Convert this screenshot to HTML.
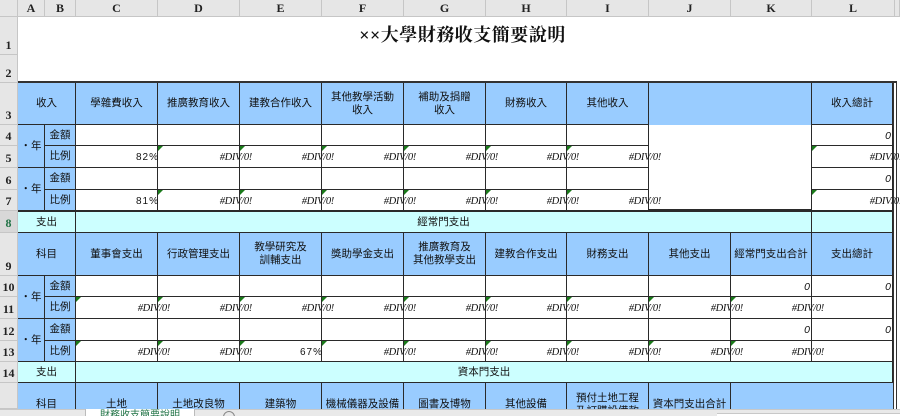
<!DOCTYPE html>
<html style="width:900px;height:416px;overflow:hidden"><head><meta charset="utf-8"><style>
body{margin:0;width:900px;height:416px;overflow:hidden;background:#fff;position:relative;font-family:"Liberation Sans","Noto Sans CJK TC",sans-serif;font-size:10.5px;color:#111}
.h{position:absolute;background:#e6e6e6;box-sizing:border-box;border-right:1px solid #c6c6c6;border-bottom:1px solid #c6c6c6;font-family:"Liberation Serif",serif;font-weight:bold;font-size:12px;color:#222;display:flex;justify-content:center;align-items:flex-end;padding-bottom:1px}
.ch{top:0;height:17px;align-items:center;padding:0}
.rh{left:0;width:18px}
.c{position:absolute;box-sizing:border-box;border-right:1px solid #2a2a2a;border-bottom:1px solid #2a2a2a;display:flex;align-items:center;justify-content:center;text-align:center;line-height:13px;white-space:nowrap}
.b{background:#99ccff}.y{background:#ccffff}.w{background:#fff}
.n{position:absolute;right:-13px;top:5px;font-style:italic;font-family:"Liberation Serif",serif;font-size:10.5px;letter-spacing:-0.3px;z-index:5}
.p{position:absolute;right:-2px;top:5px;font-size:10px;letter-spacing:1px;z-index:5}
.z{position:absolute;right:1px;top:5px;font-style:italic;font-size:10.5px}
.t{position:absolute;left:0;top:0;width:0;height:0;border-top:5px solid #1a7a1a;border-right:5px solid transparent;z-index:6}
</style></head><body>
<div class="h ch" style="left:0;width:18px;background:#e6e6e6"></div>
<div class="h ch" style="left:18px;width:27px">A</div>
<div class="h ch" style="left:45px;width:31px">B</div>
<div class="h ch" style="left:76px;width:82px">C</div>
<div class="h ch" style="left:158px;width:82px">D</div>
<div class="h ch" style="left:240px;width:82px">E</div>
<div class="h ch" style="left:322px;width:82px">F</div>
<div class="h ch" style="left:404px;width:82px">G</div>
<div class="h ch" style="left:486px;width:81px">H</div>
<div class="h ch" style="left:567px;width:82px">I</div>
<div class="h ch" style="left:649px;width:82px">J</div>
<div class="h ch" style="left:731px;width:81px">K</div>
<div class="h ch" style="left:812px;width:83px">L</div>
<div class="h ch" style="left:895px;width:5px"></div>
<div class="h rh" style="top:17px;height:38px">1</div>
<div class="h rh" style="top:55px;height:28px">2</div>
<div class="h rh" style="top:83px;height:42px">3</div>
<div class="h rh" style="top:125px;height:21px">4</div>
<div class="h rh" style="top:146px;height:22px">5</div>
<div class="h rh" style="top:168px;height:22px">6</div>
<div class="h rh" style="top:190px;height:21px">7</div>
<div class="h rh" style="top:211px;height:22px;color:#217346;background:#d8d8d8">8</div>
<div class="h rh" style="top:233px;height:43px">9</div>
<div class="h rh" style="top:276px;height:21px">10</div>
<div class="h rh" style="top:297px;height:22px">11</div>
<div class="h rh" style="top:319px;height:22px">12</div>
<div class="h rh" style="top:341px;height:21px">13</div>
<div class="h rh" style="top:362px;height:21px">14</div>
<div class="h rh" style="top:383px;height:26px"></div>

<div style="position:absolute;left:18px;top:17px;width:877px;height:66px;display:flex;align-items:center;justify-content:center;padding-bottom:32px;box-sizing:border-box;font-family:'Liberation Serif','Noto Serif CJK SC',serif;font-weight:bold;font-size:18px;letter-spacing:0.5px;padding-left:12px">××大學財務收支簡要說明</div>

<div style="position:absolute;left:18px;top:81px;width:879px;height:2px;background:#333"></div>
<div style="position:absolute;left:893px;top:81px;width:1px;height:328px;background:#333;z-index:7"></div>
<div style="position:absolute;left:896px;top:81px;width:1px;height:328px;background:#333;z-index:7"></div>

<div class="c b" style="left:18px;top:83px;width:58px;height:42px">收入</div>
<div class="c b" style="left:76px;top:83px;width:82px;height:42px">學雜費收入</div>
<div class="c b" style="left:158px;top:83px;width:82px;height:42px">推廣教育收入</div>
<div class="c b" style="left:240px;top:83px;width:82px;height:42px">建教合作收入</div>
<div class="c b" style="left:322px;top:83px;width:82px;height:42px">其他教學活動<br>收入</div>
<div class="c b" style="left:404px;top:83px;width:82px;height:42px">補助及捐贈<br>收入</div>
<div class="c b" style="left:486px;top:83px;width:81px;height:42px">財務收入</div>
<div class="c b" style="left:567px;top:83px;width:82px;height:42px">其他收入</div>
<div class="c b" style="left:649px;top:83px;width:163px;height:42px;border-bottom:none"></div>
<div class="c b" style="left:812px;top:83px;width:81px;height:42px">收入總計</div>

<div class="c b" style="left:18px;top:125px;width:27px;height:43px">‧年</div>
<div class="c b" style="left:18px;top:168px;width:27px;height:43px">‧年</div>
<div class="c b" style="left:45px;top:125px;width:31px;height:21px">金額</div>
<div class="c b" style="left:45px;top:146px;width:31px;height:22px">比例</div>
<div class="c b" style="left:45px;top:168px;width:31px;height:22px">金額</div>
<div class="c b" style="left:45px;top:190px;width:31px;height:21px">比例</div>

<div class="c w" style="left:76px;top:125px;width:82px;height:21px"></div>
<div class="c w" style="left:158px;top:125px;width:82px;height:21px"></div>
<div class="c w" style="left:240px;top:125px;width:82px;height:21px"></div>
<div class="c w" style="left:322px;top:125px;width:82px;height:21px"></div>
<div class="c w" style="left:404px;top:125px;width:82px;height:21px"></div>
<div class="c w" style="left:486px;top:125px;width:81px;height:21px"></div>
<div class="c w" style="left:567px;top:125px;width:82px;height:21px"></div>
<div class="c w" style="left:812px;top:125px;width:81px;height:21px"><span class="z">0</span></div>

<div class="c w" style="left:76px;top:146px;width:82px;height:22px"><span class="p">82%</span></div>
<div class="c w" style="left:158px;top:146px;width:82px;height:22px"><i class="t"></i><span class="n">#DIV/0!</span></div>
<div class="c w" style="left:240px;top:146px;width:82px;height:22px"><i class="t"></i><span class="n">#DIV/0!</span></div>
<div class="c w" style="left:322px;top:146px;width:82px;height:22px"><i class="t"></i><span class="n">#DIV/0!</span></div>
<div class="c w" style="left:404px;top:146px;width:82px;height:22px"><i class="t"></i><span class="n">#DIV/0!</span></div>
<div class="c w" style="left:486px;top:146px;width:81px;height:22px"><i class="t"></i><span class="n">#DIV/0!</span></div>
<div class="c w" style="left:567px;top:146px;width:82px;height:22px"><i class="t"></i><span class="n">#DIV/0!</span></div>
<div class="c w" style="left:812px;top:146px;width:81px;height:22px"><i class="t"></i><span class="n" style="right:-10px">#DIV/0!</span></div>

<div class="c w" style="left:76px;top:168px;width:82px;height:22px"></div>
<div class="c w" style="left:158px;top:168px;width:82px;height:22px"></div>
<div class="c w" style="left:240px;top:168px;width:82px;height:22px"></div>
<div class="c w" style="left:322px;top:168px;width:82px;height:22px"></div>
<div class="c w" style="left:404px;top:168px;width:82px;height:22px"></div>
<div class="c w" style="left:486px;top:168px;width:81px;height:22px"></div>
<div class="c w" style="left:567px;top:168px;width:82px;height:22px"></div>
<div class="c w" style="left:812px;top:168px;width:81px;height:22px"><span class="z">0</span></div>

<div class="c w" style="left:76px;top:190px;width:82px;height:21px"><span class="p">81%</span></div>
<div class="c w" style="left:158px;top:190px;width:82px;height:21px"><i class="t"></i><span class="n">#DIV/0!</span></div>
<div class="c w" style="left:240px;top:190px;width:82px;height:21px"><i class="t"></i><span class="n">#DIV/0!</span></div>
<div class="c w" style="left:322px;top:190px;width:82px;height:21px"><i class="t"></i><span class="n">#DIV/0!</span></div>
<div class="c w" style="left:404px;top:190px;width:82px;height:21px"><i class="t"></i><span class="n">#DIV/0!</span></div>
<div class="c w" style="left:486px;top:190px;width:81px;height:21px"><i class="t"></i><span class="n">#DIV/0!</span></div>
<div class="c w" style="left:567px;top:190px;width:82px;height:21px"><i class="t"></i><span class="n">#DIV/0!</span></div>
<div class="c w" style="left:812px;top:190px;width:81px;height:21px"><i class="t"></i><span class="n" style="right:-10px">#DIV/0!</span></div>
<div class="c" style="left:649px;top:125px;width:163px;height:86px;border-bottom:2px solid #2a2a2a"></div>
<div style="position:absolute;left:18px;top:210px;width:875px;height:2px;background:#2a2a2a"></div>

<div class="c y" style="left:18px;top:212px;width:58px;height:21px">支出</div>
<div class="c y" style="left:76px;top:212px;width:736px;height:21px">經常門支出</div>
<div class="c y" style="left:812px;top:212px;width:81px;height:21px"></div>

<div class="c b" style="left:18px;top:233px;width:58px;height:43px">科目</div>
<div class="c b" style="left:76px;top:233px;width:82px;height:43px">董事會支出</div>
<div class="c b" style="left:158px;top:233px;width:82px;height:43px">行政管理支出</div>
<div class="c b" style="left:240px;top:233px;width:82px;height:43px">教學研究及<br>訓輔支出</div>
<div class="c b" style="left:322px;top:233px;width:82px;height:43px">獎助學金支出</div>
<div class="c b" style="left:404px;top:233px;width:82px;height:43px">推廣教育及<br>其他教學支出</div>
<div class="c b" style="left:486px;top:233px;width:81px;height:43px">建教合作支出</div>
<div class="c b" style="left:567px;top:233px;width:82px;height:43px">財務支出</div>
<div class="c b" style="left:649px;top:233px;width:82px;height:43px">其他支出</div>
<div class="c b" style="left:731px;top:233px;width:81px;height:43px">經常門支出合計</div>
<div class="c b" style="left:812px;top:233px;width:81px;height:43px">支出總計</div>

<div class="c b" style="left:18px;top:276px;width:27px;height:43px">‧年</div>
<div class="c b" style="left:18px;top:319px;width:27px;height:43px">‧年</div>
<div class="c b" style="left:45px;top:276px;width:31px;height:21px">金額</div>
<div class="c b" style="left:45px;top:297px;width:31px;height:22px">比例</div>
<div class="c b" style="left:45px;top:319px;width:31px;height:22px">金額</div>
<div class="c b" style="left:45px;top:341px;width:31px;height:21px">比例</div>

<div class="c w" style="left:76px;top:276px;width:82px;height:21px"></div>
<div class="c w" style="left:158px;top:276px;width:82px;height:21px"></div>
<div class="c w" style="left:240px;top:276px;width:82px;height:21px"></div>
<div class="c w" style="left:322px;top:276px;width:82px;height:21px"></div>
<div class="c w" style="left:404px;top:276px;width:82px;height:21px"></div>
<div class="c w" style="left:486px;top:276px;width:81px;height:21px"></div>
<div class="c w" style="left:567px;top:276px;width:82px;height:21px"></div>
<div class="c w" style="left:649px;top:276px;width:82px;height:21px"></div>
<div class="c w" style="left:731px;top:276px;width:81px;height:21px"><span class="z">0</span></div>
<div class="c w" style="left:812px;top:276px;width:81px;height:21px"><span class="z">0</span></div>

<div class="c w" style="left:76px;top:297px;width:82px;height:22px"><i class="t"></i><span class="n">#DIV/0!</span></div>
<div class="c w" style="left:158px;top:297px;width:82px;height:22px"><i class="t"></i><span class="n">#DIV/0!</span></div>
<div class="c w" style="left:240px;top:297px;width:82px;height:22px"><i class="t"></i><span class="n">#DIV/0!</span></div>
<div class="c w" style="left:322px;top:297px;width:82px;height:22px"><i class="t"></i><span class="n">#DIV/0!</span></div>
<div class="c w" style="left:404px;top:297px;width:82px;height:22px"><i class="t"></i><span class="n">#DIV/0!</span></div>
<div class="c w" style="left:486px;top:297px;width:81px;height:22px"><i class="t"></i><span class="n">#DIV/0!</span></div>
<div class="c w" style="left:567px;top:297px;width:82px;height:22px"><i class="t"></i><span class="n">#DIV/0!</span></div>
<div class="c w" style="left:649px;top:297px;width:82px;height:22px"><i class="t"></i><span class="n">#DIV/0!</span></div>
<div class="c w" style="left:731px;top:297px;width:81px;height:22px"><i class="t"></i><span class="n">#DIV/0!</span></div>
<div class="c w" style="left:812px;top:297px;width:81px;height:22px"></div>

<div class="c w" style="left:76px;top:319px;width:82px;height:22px"></div>
<div class="c w" style="left:158px;top:319px;width:82px;height:22px"></div>
<div class="c w" style="left:240px;top:319px;width:82px;height:22px"></div>
<div class="c w" style="left:322px;top:319px;width:82px;height:22px"></div>
<div class="c w" style="left:404px;top:319px;width:82px;height:22px"></div>
<div class="c w" style="left:486px;top:319px;width:81px;height:22px"></div>
<div class="c w" style="left:567px;top:319px;width:82px;height:22px"></div>
<div class="c w" style="left:649px;top:319px;width:82px;height:22px"></div>
<div class="c w" style="left:731px;top:319px;width:81px;height:22px"><span class="z">0</span></div>
<div class="c w" style="left:812px;top:319px;width:81px;height:22px"><span class="z">0</span></div>

<div class="c w" style="left:76px;top:341px;width:82px;height:21px"><i class="t"></i><span class="n">#DIV/0!</span></div>
<div class="c w" style="left:158px;top:341px;width:82px;height:21px"><i class="t"></i><span class="n">#DIV/0!</span></div>
<div class="c w" style="left:240px;top:341px;width:82px;height:21px"><i class="t"></i><span class="p">67%</span></div>
<div class="c w" style="left:322px;top:341px;width:82px;height:21px"><i class="t"></i><span class="n">#DIV/0!</span></div>
<div class="c w" style="left:404px;top:341px;width:82px;height:21px"><i class="t"></i><span class="n">#DIV/0!</span></div>
<div class="c w" style="left:486px;top:341px;width:81px;height:21px"><i class="t"></i><span class="n">#DIV/0!</span></div>
<div class="c w" style="left:567px;top:341px;width:82px;height:21px"><i class="t"></i><span class="n">#DIV/0!</span></div>
<div class="c w" style="left:649px;top:341px;width:82px;height:21px"><i class="t"></i><span class="n">#DIV/0!</span></div>
<div class="c w" style="left:731px;top:341px;width:81px;height:21px"><i class="t"></i><span class="n">#DIV/0!</span></div>
<div class="c w" style="left:812px;top:341px;width:81px;height:21px"></div>

<div class="c y" style="left:18px;top:362px;width:58px;height:21px">支出</div>
<div class="c y" style="left:76px;top:362px;width:817px;height:21px">資本門支出</div>

<div style="position:absolute;left:0;top:383px;width:900px;height:26px;overflow:hidden">
<div class="c b" style="left:18px;top:0;width:58px;height:44px">科目</div>
<div class="c b" style="left:76px;top:0;width:82px;height:44px">土地</div>
<div class="c b" style="left:158px;top:0;width:82px;height:44px">土地改良物</div>
<div class="c b" style="left:240px;top:0;width:82px;height:44px">建築物</div>
<div class="c b" style="left:322px;top:0;width:82px;height:44px">機械儀器及設備</div>
<div class="c b" style="left:404px;top:0;width:82px;height:44px">圖書及博物</div>
<div class="c b" style="left:486px;top:0;width:81px;height:44px">其他設備</div>
<div class="c b" style="left:567px;top:0;width:82px;height:44px">預付土地工程<br>及訂購設備款</div>
<div class="c b" style="left:649px;top:0;width:82px;height:44px">資本門支出合計</div>
<div style="position:absolute;left:731px;top:0;width:162px;height:44px;background:#99ccff"></div>
</div>

<div style="position:absolute;left:0;top:409px;width:900px;height:7px;background:#e9e9e9;border-top:1px solid #c8c8c8;z-index:8"></div>
<div style="position:absolute;left:85px;top:409px;width:108px;height:7px;background:#fff;border-left:1px solid #bbb;border-right:1px solid #bbb;overflow:hidden;font-size:10px;color:#217346;text-align:center;line-height:14px;z-index:9">財務收支簡要說明</div>
<div style="position:absolute;left:223px;top:411px;width:10px;height:10px;border:1px solid #888;border-radius:50%;z-index:9"></div>
<div style="position:absolute;left:717px;top:413px;width:183px;height:3px;background:#fff;border-top:1px solid #c8c8c8;z-index:9"></div>
</body></html>
